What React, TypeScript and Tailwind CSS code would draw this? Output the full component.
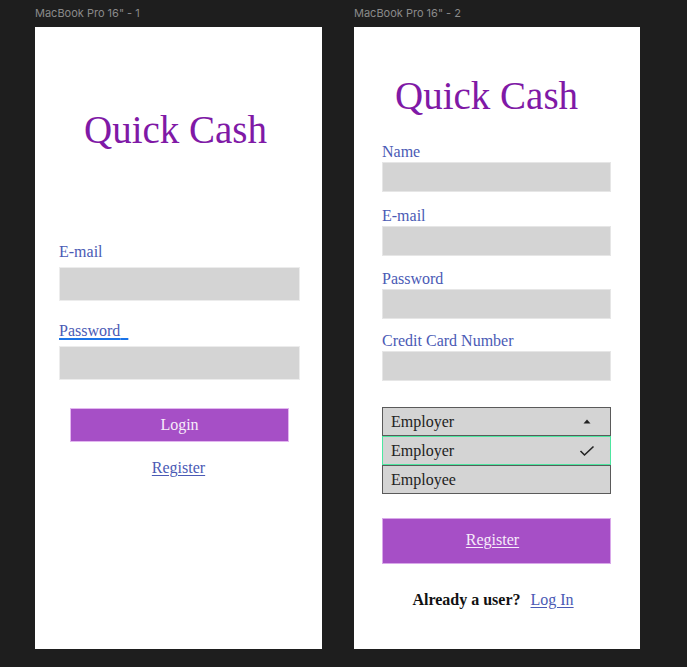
import React from "react";

const serif = { fontFamily: '"Liberation Serif", "DejaVu Serif", serif' };

function Field({ label, className = "" }: { label: string; className?: string }) {
  return (
    <div className={className}>
      <div className="text-[16px] leading-[20px] text-[#4a5ab5]">{label}</div>
      <div className="h-[30px] w-full border border-[#e6e6e6] bg-[#d4d4d4]" />
    </div>
  );
}

export default function App() {
  return (
    <div className="flex h-[667px] w-[687px] gap-[32px] bg-[#1e1e1e] pl-[35px]" style={serif}>
      {/* Frame 1 */}
      <div className="flex w-[287px] flex-col">
        <div
          className="h-[27px] pt-[6px] text-[11px] leading-[14px] text-[#8a8a8a]"
          style={{ fontFamily: '"Inter", "Roboto", sans-serif' }}
        >
          MacBook Pro 16" - 1
        </div>
        <div className="flex h-[622px] flex-col bg-white">
          <div className="mt-[83px] pr-[6px] text-center text-[39px] leading-[39px] text-[#8019a6]">
            Quick Cash
          </div>
          <div className="mt-[93px] px-[24px] pr-[22px]">
            <div className="text-[16px] leading-[20px] text-[#4a5ab5]">E-mail</div>
            <div className="mt-[5px] h-[34px] border border-[#ececec] bg-[#d4d4d4]" />
            <div className="mt-[20px] text-[16px] leading-[20px] text-[#4a5ab5]">
              <span className="underline decoration-[#1a73e8] decoration-2 underline-offset-[2px]">
                Password{"\u00a0\u00a0"}
              </span>
            </div>
            <div className="mt-[5px] h-[34px] border border-[#ececec] bg-[#d4d4d4]" />
          </div>
          <div className="ml-[35px] mt-[28px] flex h-[34px] w-[219px] items-center justify-center border border-[#e3b6f0] bg-[#a64fc6] text-[16px] text-[#f7ecfa]">
            Login
          </div>
          <div className="mt-[16px] text-center text-[16px] leading-[20px] text-[#4a5ab5]">
            <span className="underline underline-offset-[2px]">Register</span>
          </div>
        </div>
      </div>

      {/* Frame 2 */}
      <div className="flex w-[286px] flex-col">
        <div
          className="h-[27px] pt-[6px] text-[11px] leading-[14px] text-[#8a8a8a]"
          style={{ fontFamily: '"Inter", "Roboto", sans-serif' }}
        >
          MacBook Pro 16" - 2
        </div>
        <div className="flex h-[622px] flex-col bg-white">
          <div className="ml-[41px] mt-[49px] text-[39px] leading-[39px] text-[#8019a6]">Quick Cash</div>
          <div className="mt-[27px] flex flex-col pl-[28px] pr-[29px]">
            <Field label="Name" />
            <Field label="E-mail" className="mt-[14px]" />
            <Field label="Password" className="mt-[13px]" />
            <Field label="Credit Card Number" className="mt-[12px]" />
          </div>
          <div className="ml-[28px] mt-[26px] w-[229px] text-[16px] text-[#222]">
            <div className="flex h-[29px] items-center justify-between border border-[#5a5a5a] bg-[#d4d4d4] pl-[8px] pr-[19px]">
              <span>Employer</span>
              <svg width="8" height="5" viewBox="0 0 8 5">
                <path d="M4 0.5 L7.5 4.5 L0.5 4.5 Z" fill="#222" />
              </svg>
            </div>
            <div className="flex h-[29px] items-center justify-between border border-[#4de6a0] bg-[#d4d4d4] pl-[8px] pr-[15px]">
              <span>Employer</span>
              <svg width="16" height="12" viewBox="0 0 16 12">
                <path d="M1.5 6 L5.5 10 L14.5 1.5" fill="none" stroke="#222" strokeWidth="1.6" />
              </svg>
            </div>
            <div className="flex h-[29px] items-center border border-[#5a5a5a] bg-[#d4d4d4] pl-[8px]">
              <span>Employee</span>
            </div>
          </div>
          <div className="ml-[28px] mt-[24px] flex h-[46px] w-[229px] items-center justify-center border border-[#d9a8ea] bg-[#a64fc6] pr-[8px] text-[16px] text-[#f7ecfa]">
            <span className="mt-[-2px] underline underline-offset-[2px]">Register</span>
          </div>
          <div className="mt-[26px] flex justify-center gap-[10px] pr-[8px] text-[16px] leading-[20px]">
            <span className="font-bold text-[#111]">Already a user?</span>
            <span className="text-[#4a5ab5] underline underline-offset-[2px]">Log In</span>
          </div>
        </div>
      </div>
    </div>
  );
}
